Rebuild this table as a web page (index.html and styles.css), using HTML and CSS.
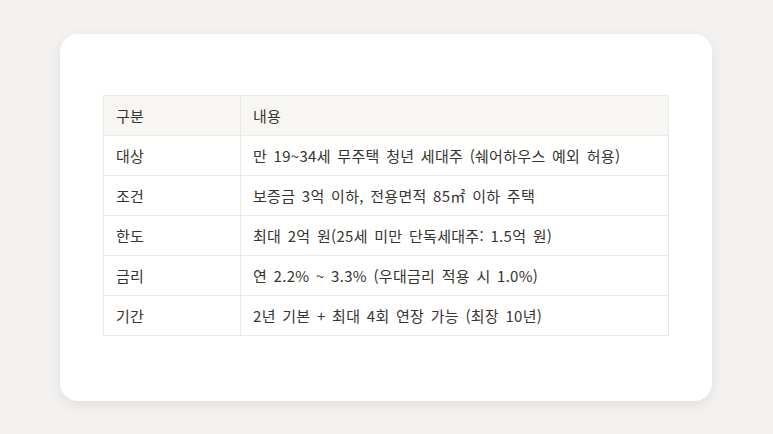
FILE: index.html
```html
<!DOCTYPE html>
<html lang="ko">
<head>
<meta charset="utf-8">
<link rel="stylesheet" href="styles.css">
</head>
<body>
<div class="card">
  <table class="info">
    <thead>
      <tr><th class="c1">구분</th><th>내용</th></tr>
    </thead>
    <tbody>
      <tr><td class="c1">대상</td><td>만 19~34세 무주택 청년 세대주 (쉐어하우스 예외 허용)</td></tr>
      <tr><td class="c1">조건</td><td>보증금 3억 이하, 전용면적 85㎡ 이하 주택</td></tr>
      <tr><td class="c1">한도</td><td>최대 2억 원(25세 미만 단독세대주: 1.5억 원)</td></tr>
      <tr><td class="c1">금리</td><td>연 2.2% ~ 3.3% (우대금리 적용 시 1.0%)</td></tr>
      <tr><td class="c1">기간</td><td>2년 기본 + 최대 4회 연장 가능 (최장 10년)</td></tr>
    </tbody>
  </table>
</div>
</body>
</html>
```

FILE: styles.css
```css
html, body {
  margin: 0;
  padding: 0;
  background: #f3f2f0;
}
body {
  padding: 34px 61px 34px 60px;
  font-family: "Noto Sans CJK KR", "Noto Sans", sans-serif;
  color: #37352f;
}
.card {
  background: #ffffff;
  border-radius: 18px;
  box-shadow: 0 4px 14px rgba(0, 0, 0, 0.08);
  padding: 61px 43px 65px 43px;
}
.info {
  width: 100%;
  border-collapse: collapse;
  font-size: 15px;
  letter-spacing: 0.3px;
  word-spacing: 2px;
}
.info th, .info td {
  border: 1px solid #e9e9e7;
  height: 40px;
  padding: 0 12px;
  text-align: left;
  font-weight: 400;
  vertical-align: middle;
  box-sizing: border-box;
}
.info th {
  background: #f7f6f3;
}
.info .c1 {
  width: 137px;
}
```
